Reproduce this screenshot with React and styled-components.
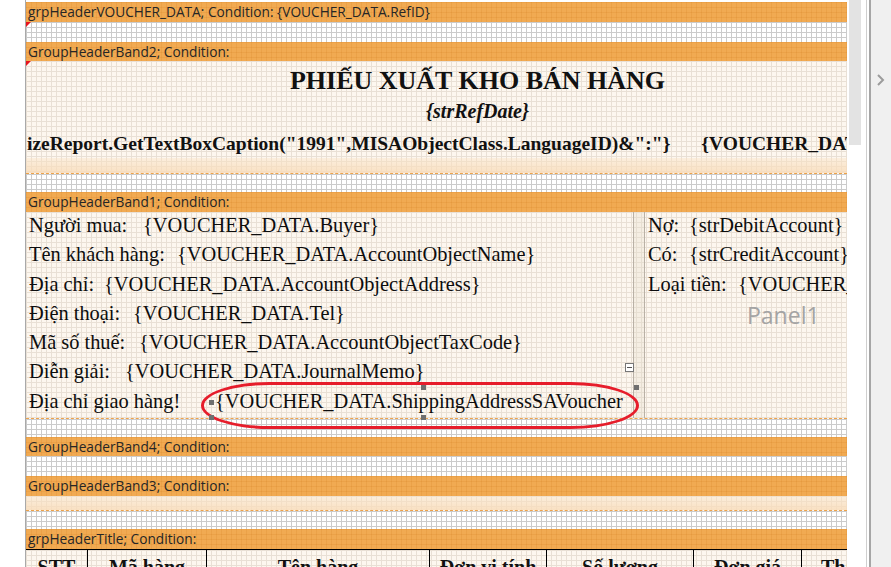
import React from "react";
import styled, { createGlobalStyle, css } from "styled-components";

const GlobalStyle = createGlobalStyle`
  html, body {
    margin: 0;
    padding: 0;
    background: #ffffff;
  }
  body {
    width: 891px;
    height: 567px;
    overflow: hidden;
  }
`;

const gridLines = (color) => css`
  background-image: linear-gradient(to right, ${color} 1px, transparent 1px),
    linear-gradient(to bottom, ${color} 1px, transparent 1px);
  background-size: 5px 5px;
`;

const marker = css`
  position: relative;
  &::before {
    content: "";
    position: absolute;
    left: 0;
    top: 0;
    border-top: 5px solid #e8141e;
    border-right: 5px solid transparent;
  }
`;

const Page = styled.div`
  display: flex;
  width: 891px;
  height: 567px;
  overflow: hidden;
  background: #ffffff;
`;

const Gutter = styled.div`
  width: 25px;
  flex: none;
  border-right: 1px solid #a9a9a9;
`;

const Canvas = styled.div`
  width: 821px;
  flex: none;
  padding-top: 2px;
  overflow: hidden;
  display: flex;
  flex-direction: column;
`;

const ScrollArea = styled.div`
  width: 19px;
  flex: none;
  padding-left: 2px;
  box-sizing: border-box;
`;

const ScrollThumb = styled.div`
  width: 12px;
  height: 145px;
  background: #e3e3e3;
`;

const Splitter = styled.div`
  width: 5px;
  flex: none;
  box-sizing: border-box;
  border-left: 1px solid #cfcfcf;
  border-right: 2px solid #a6a6a6;
`;

const SidePanel = styled.div`
  flex: 1;
  background: #f0f0f0;
  display: flex;
  justify-content: center;
  padding-top: 73px;
  color: #9c9c9c;
`;

const BandHeader = styled.div`
  height: ${(p) => p.$h || 20}px;
  flex: none;
  box-sizing: border-box;
  background-color: #f1aa52;
  ${gridLines("rgba(214, 130, 40, 0.22)")};
  font-family: "Open Sans", "Noto Sans", sans-serif;
  font-size: 13.7px;
  line-height: ${(p) => p.$h || 20}px;
  color: #262626;
  padding-left: 2px;
  white-space: nowrap;
`;

const Blank = styled.div`
  height: ${(p) => p.$h}px;
  flex: none;
  background-color: #ffffff;
  ${gridLines("#cbcbcb")};
  ${(p) => p.$marker && marker};
`;

const Body = styled.div`
  position: relative;
  height: ${(p) => p.$h}px;
  flex: none;
  background-color: #fdf7ef;
  ${gridLines("#e9e0d5")};
  border-bottom: 1px dashed #eda24a;
  ${(p) => p.$marker && marker};
`;

const Fade = styled.div`
  height: ${(p) => p.$h}px;
  background: linear-gradient(to bottom, rgba(250, 226, 196, 0.4), rgba(248, 220, 186, 0.85));
`;

const TitleBlock = styled.div`
  height: 97px;
  display: flex;
  flex-direction: column;
  font-family: "Liberation Serif", "Times New Roman", serif;
  font-weight: bold;
  color: #111111;
`;

const Title = styled.div`
  padding-left: 82px;
  padding-top: 5px;
  text-align: center;
  font-size: 26px;
  line-height: 30px;
`;

const SubTitle = styled.div`
  padding-left: 82px;
  padding-top: 1px;
  text-align: center;
  font-style: italic;
  font-size: 20px;
  line-height: 28px;
`;

const CaptionLine = styled.div`
  display: flex;
  white-space: pre;
  font-size: 19.5px;
  line-height: 32px;
  padding-top: 3px;
  padding-left: 1px;
`;

const CaptionValue = styled.span`
  margin-left: 31px;
`;

const FieldArea = styled.div`
  display: flex;
  height: 100%;
`;

const LeftPanel = styled.div`
  position: relative;
  width: 607px;
  flex: none;
  border-right: 1px solid #b9b1a6;
`;

const PanelGap = styled.div`
  width: 10px;
  flex: none;
  border-right: 1px solid #b9b1a6;
  background: rgba(230, 220, 206, 0.35);
`;

const RightPanel = styled.div`
  flex: 1;
  display: flex;
  flex-direction: column;
  overflow: hidden;
`;

const Row = styled.div`
  height: 29.3px;
  display: flex;
  align-items: flex-start;
  font-family: "Liberation Serif", "Times New Roman", serif;
  font-size: 20.4px;
  line-height: 26px;
  color: #0d0d0d;
  white-space: nowrap;
  padding-left: ${(p) => p.$pad || 3}px;
`;

const Label = styled.span`
  width: ${(p) => p.$w}px;
  flex: none;
`;

const Value = styled.span`
  flex: none;
`;

const PanelName = styled.div`
  padding-left: 102px;
  font-family: "Open Sans", "Noto Sans", sans-serif;
  font-size: 23px;
  line-height: 30px;
  color: #a4a4a4;
`;

const Highlight = styled.div`
  position: absolute;
  left: 175px;
  top: 170px;
  width: 438px;
  height: 47px;
  box-sizing: border-box;
  border: 3.5px solid #e61d2b;
  border-radius: 70px / 24px;
  pointer-events: none;
`;

const Handle = styled.div`
  position: absolute;
  width: 5px;
  height: 5px;
  background: #6f6f6f;
  left: ${(p) => p.$x}px;
  top: ${(p) => p.$y}px;
`;

const CollapseIcon = styled.div`
  position: absolute;
  left: 599px;
  top: 151px;
  width: 7px;
  height: 7px;
  border: 1px solid #777777;
  background: #ffffff;
  &::after {
    content: "";
    position: absolute;
    left: 1px;
    top: 3px;
    width: 5px;
    height: 1px;
    background: #555555;
  }
`;

const TableRow = styled.div`
  display: grid;
  grid-template-columns: 62px 119px 223px 117px 147px 108px 133px;
  width: 909px;
  border-top: 1px solid #000000;
  background-color: #fdf7ef;
  ${gridLines("#e9e0d5")};
  height: 40px;
`;

const HeadCell = styled.div`
  border-right: 1px solid #000000;
  text-align: center;
  font-family: "Liberation Serif", "Times New Roman", serif;
  font-weight: bold;
  font-size: 20px;
  line-height: 24px;
  padding-top: 5px;
  white-space: nowrap;
  overflow: hidden;
  color: #111111;
`;

const leftRows = [
  { label: "Người mua:", w: 114, value: "{VOUCHER_DATA.Buyer}" },
  { label: "Tên khách hàng:", w: 148, value: "{VOUCHER_DATA.AccountObjectName}" },
  { label: "Địa chỉ:", w: 75, value: "{VOUCHER_DATA.AccountObjectAddress}" },
  { label: "Điện thoại:", w: 104, value: "{VOUCHER_DATA.Tel}" },
  { label: "Mã số thuế:", w: 110, value: "{VOUCHER_DATA.AccountObjectTaxCode}" },
  { label: "Diễn giải:", w: 96, value: "{VOUCHER_DATA.JournalMemo}" },
  { label: "Địa chỉ giao hàng!", w: 186, value: "{VOUCHER_DATA.ShippingAddressSAVoucher" },
];

const rightRows = [
  { label: "Nợ:", w: 41, value: "{strDebitAccount}" },
  { label: "Có:", w: 41, value: "{strCreditAccount}" },
  { label: "Loại tiền:", w: 90, value: "{VOUCHER_DATA.CurrencyID}" },
];

const columns = ["STT", "Mã hàng", "Tên hàng", "Đơn vị tính", "Số lượng", "Đơn giá", "Thành tiền"];

const App = () => {
  return (
    <Page>
      <GlobalStyle />
      <Gutter />
      <Canvas>
        <BandHeader>grpHeaderVOUCHER_DATA; Condition: {"{VOUCHER_DATA.RefID}"}</BandHeader>
        <Blank $h={20} $marker />
        <BandHeader $h={19}>GroupHeaderBand2; Condition:</BandHeader>
        <Body $h={112} $marker>
          <TitleBlock>
            <Title>PHIẾU XUẤT KHO BÁN HÀNG</Title>
            <SubTitle>{"{strRefDate}"}</SubTitle>
            <CaptionLine>
              <span>izeReport.GetTextBoxCaption("1991",MISAObjectClass.LanguageID)&amp;":"{"}"}</span>
              <CaptionValue>{"{VOUCHER_DATA.RefNo}"}</CaptionValue>
            </CaptionLine>
          </TitleBlock>
          <Fade $h={15} />
        </Body>
        <Blank $h={18} />
        <BandHeader>GroupHeaderBand1; Condition:</BandHeader>
        <Body $h={206}>
          <FieldArea>
            <LeftPanel>
              {leftRows.map((r) => (
                <Row key={r.label}>
                  <Label $w={r.w}>{r.label}</Label>
                  <Value>{r.value}</Value>
                </Row>
              ))}
              <CollapseIcon />
            </LeftPanel>
            <PanelGap />
            <RightPanel>
              {rightRows.map((r) => (
                <Row key={r.label} $pad={3}>
                  <Label $w={r.w}>{r.label}</Label>
                  <Value>{r.value}</Value>
                </Row>
              ))}
              <PanelName>Panel1</PanelName>
            </RightPanel>
          </FieldArea>
          <Highlight />
          <Handle $x={183} $y={188} />
          <Handle $x={183} $y={203} />
          <Handle $x={395} $y={173} />
          <Handle $x={395} $y={203} />
          <Handle $x={608} $y={173} />
        </Body>
        <Blank $h={18} />
        <BandHeader $h={19}>GroupHeaderBand4; Condition:</BandHeader>
        <Blank $h={20} />
        <BandHeader>GroupHeaderBand3; Condition:</BandHeader>
        <Body $h={14}>
          <Fade $h={14} />
        </Body>
        <Blank $h={18} />
        <BandHeader>grpHeaderTitle; Condition:</BandHeader>
        <TableRow>
          {columns.map((c) => (
            <HeadCell key={c}>{c}</HeadCell>
          ))}
        </TableRow>
      </Canvas>
      <ScrollArea>
        <ScrollThumb />
      </ScrollArea>
      <Splitter />
      <SidePanel>
        <svg width="10" height="14" viewBox="0 0 10 14">
          <path d="M2 2 L7 7 L2 12" fill="none" stroke="#9c9c9c" strokeWidth="2" />
        </svg>
      </SidePanel>
    </Page>
  );
};

export default App;
